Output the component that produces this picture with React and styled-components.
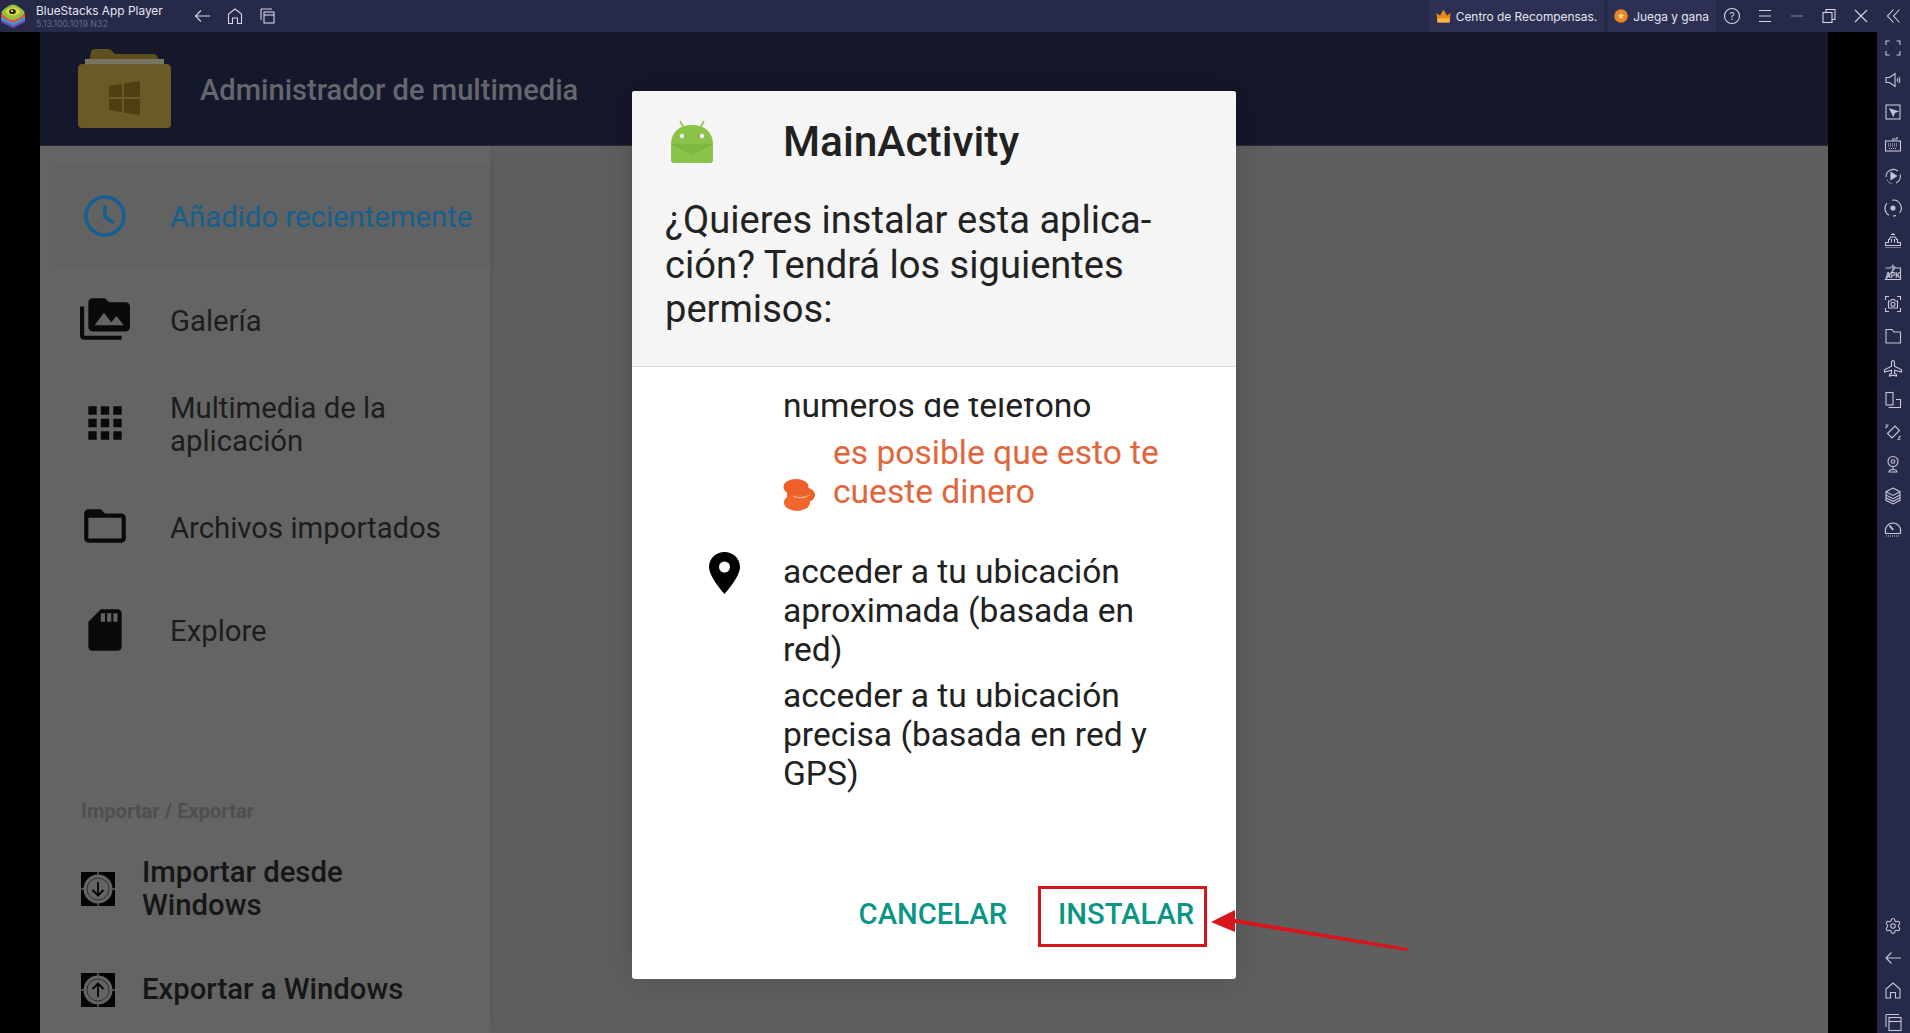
import React from 'react';
import styled, { createGlobalStyle } from 'styled-components';
import { Settings } from 'lucide-react';

const Global = createGlobalStyle`
  html, body { margin: 0; padding: 0; height: 100%; overflow: hidden; background: #000; }
  * { box-sizing: border-box; }
  #root { height: 100%; }
`;

const Page = styled.div`
  position: relative; width: 1910px; height: 1033px; overflow: hidden;
  display: flex; flex-direction: column; background: #000;
`;

/* title bar */
const TitleBar = styled.header`
  height: 32px; flex: none; background: #272948; display: flex; align-items: center;
  font-family: Inter, "Liberation Sans", sans-serif; color: #e4e5f0;
`;
const LogoSlot = styled.div`width: 36px; height: 32px; flex: none; display: flex; align-items: center;`;
const TitleCol = styled.div`width: 155px; flex: none; display: flex; flex-direction: column; margin-top: -1px;`;
const AppName = styled.div`font-size: 11.9px; line-height: 16px; white-space: nowrap;`;
const Version = styled.div`font-size: 8.8px; line-height: 10px; color: #666985; white-space: nowrap;`;
const NavGroup = styled.nav`display: flex; gap: 8px;`;
const Spacer = styled.div`flex: 1;`;
const Tab = styled.div`
  height: 32px; display: flex; align-items: center; gap: 5px; padding: 0 7px 0 ${p => p.$pad}px; margin-right: 4px;
  background: #2d3052; font-size: 11.9px; white-space: nowrap;
`;
const ControlGroup = styled.div`display: flex; align-items: center; gap: 4px; margin-left: -3px; margin-right: 2px;`;

const IconCell = styled.div`
  width: ${p => p.$w || 24}px; height: ${p => p.$h || 24}px; flex: none; display: flex; align-items: center; justify-content: center; color: #d4d5e6;
  svg { display: block; }
`;

/* stage */
const Stage = styled.div`flex: 1; min-height: 0; display: flex;`;
const Letterbox = styled.div`flex: 1; min-width: 0; padding: 0 49px 0 40px; background: #000; display: flex;`;
const Screen = styled.main`position: relative; flex: 1; min-width: 0; display: flex; flex-direction: column; overflow: hidden; background: #5f5f5f;`;
const AppHeader = styled.div`
  height: 114px; flex: none; background: #15172a; display: flex; align-items: center; padding-left: 38px; gap: 29px;
  border-bottom: 1px solid #2a2b36;
`;
const AppTitle = styled.h1`
  margin: 0; padding-top: 5px; font: 500 29.1px/1 Roboto, sans-serif; color: #65666f; white-space: nowrap;
`;
const Content = styled.div`flex: 1; min-height: 0; display: flex;`;
const Sidebar = styled.aside`
  width: 450px; flex: none; background: #646464; display: flex; flex-direction: column; overflow: hidden;
  padding-top: 18px; box-shadow: 6px 0 14px -8px rgba(0,0,0,.14);
`;
const Row = styled.div`
  height: 103.5px; flex: none; display: flex; align-items: center; gap: 40px;
  font: 400 29.3px/33px Roboto, sans-serif; color: ${p => p.$active ? '#15608e' : '#1d1d1d'};
  background: ${p => p.$active ? '#626262' : 'transparent'};
  margin-left: ${p => p.$active ? 15 : 0}px;
  padding-left: ${p => p.$active ? 25 : 40}px;
  svg { flex: none; fill: currentColor; }
`;
const RowText = styled.span`padding-top: 4px;`;
const RowIcon = styled.svg`color: #0a0a0a; fill: #0a0a0a;`;
const SectionLabel = styled.div`
  margin: 117px 0 0 41px; font: 700 20.1px/24px Roboto, sans-serif; color: #4f4f4f;
`;
const IORow = styled.div`
  display: flex; align-items: center; padding-left: 41px; gap: 27px; height: ${p => p.$h}px; flex: none; margin-top: ${p => p.$mt}px;
  font: 500 29.3px/33px Roboto, sans-serif; color: #161616;
  svg { flex: none; }
`;

/* dialog */
const Scrim = styled.div`
  position: absolute; inset: 0; display: flex; align-items: center; justify-content: center; padding: 5px 0 0 0;
`;
const Dialog = styled.section`
  width: 604px; height: 888px; display: flex; flex-direction: column; background: #fff; border-radius: 3px; overflow: hidden;
  box-shadow: 0 0 34px rgba(0,0,0,.16); font-family: Roboto, sans-serif; color: #212121;
`;
const DialogHead = styled.div`
  height: 276px; flex: none; background: #f5f5f5; border-bottom: 1px solid #dcdcdc; padding: 25px 34px 0;
`;
const DialogTitleRow = styled.div`display: flex; align-items: center; height: 50px; padding-left: 5px; gap: 70px;`;
const DialogTitle = styled.h2`margin: 0; padding-top: 2px; font: 500 42.4px/50px Roboto, sans-serif; color: #212121;`;
const Message = styled.p`margin: 32px 0 0 -1px; font: 400 38.1px/44.7px Roboto, sans-serif; color: #222;`;
const DialogBody = styled.div`flex: 1; min-height: 0; padding-top: 31px;`;
const Clip = styled.div`height: 100%; overflow: hidden;`;
const ScrollInner = styled.div`margin-top: -12px; padding-left: 34px; padding-right: 30px; font: 400 33.6px/39px Roboto, sans-serif; color: #212121;`;
const Perm = styled.div`display: grid; grid-template-columns: 117px 1fr; margin-top: ${p => p.$mt || 0}px;`;
const PermIcon = styled.div`display: flex; justify-content: center; svg { display: block; }`;
const Cost = styled.div`display: flex; align-items: flex-end; gap: 18px; color: #e2653b; svg { flex: none; }`;
const DialogFooter = styled.footer`
  flex: none; display: flex; justify-content: flex-end; align-items: center; gap: 31px; padding: 0 29px 32px 0;
`;
const TextButton = styled.button`
  appearance: none; background: none; border: 0; padding: 0 0 4px; font: 500 29.2px/1 Roboto, sans-serif; color: #0b9584;
`;
const InstallButton = styled(TextButton)`
  width: 169px; height: 61px; border: 3px solid #d4161c; padding: 0 0 4px 17px; text-align: left;
`;
const Arrow = styled.svg`position: absolute; left: 1210px; top: 900px;`;

/* right rail */
const Rail = styled.aside`
  width: 33px; flex: none; background: #272948; display: flex; flex-direction: column; justify-content: space-between; overflow: hidden;
`;
const RailGroup = styled.div`display: flex; flex-direction: column; margin-bottom: ${p => p.$mb || 0}px;`;
const RailCell = styled.div`height: 32px; flex: none; display: flex; align-items: center; justify-content: center; padding-right: 1px; color: #c6c8dd; svg { display: block; }`;

const S = ({ children, size = 24 }) => (
  <svg width={size} height={size} viewBox="0 0 24 24" fill="none" stroke="currentColor" strokeWidth="1.1">{children}</svg>
);

const railTop = [
  <S><path d="M5 9V5h3.500M15.500 5H19v4M5 15v4h3.500M15.500 19H19v-4" /></S>,
  <S><path d="M5 9.500h3.500L14 5.500v13l-5.500-4H5z" /><path d="M16 10.300a2.500 2.500 0 0 1 0 3.400M17.800 9a5 5 0 0 1 0 6" /></S>,
  <S><rect x="5" y="5" width="14" height="14" /><path d="M9 9l7.500 2.400-3.200 1.100-1 3.300z" fill="currentColor" /></S>,
  <S><rect x="4.500" y="9" width="15" height="10" /><path d="M12 9V7h4V5" /><path d="M7 12h10M7 14h10M8 16.500h8" strokeDasharray="1 1" /></S>,
  <S><path d="M5 13a7.500 7.500 0 0 1 12-6M19.300 10.500A7.500 7.500 0 0 1 15 19" /><path d="M6 16l3 3.300 3 .6" strokeDasharray="1 1.400" /><path d="M10 8.500l5.500 3.500-5.500 3.500z" fill="currentColor" /></S>,
  <S><path d="M6 7a8 8 0 0 0 2 12.300M11 4.200A8 8 0 0 1 18.600 17 M15 19.500a8 8 0 0 1-3 .5" /><circle cx="12" cy="12" r="2" fill="currentColor" /></S>,
  <S><path d="M4.500 14.500h3v-3h1l1-2.500h5l1 2.500h1v3h3v3h-15z" /><path d="M10.500 11v3.500M13.500 11v3.500M10 6.500h4M12 5v2" /><path d="M4.500 19.500h15" strokeDasharray="1 1" /></S>,
  <S><path d="M4.500 8H10M14 8h5.500v11.500h-15z" /><path d="M12 4.500v6M9.500 7H14.500" /><text x="12" y="17.500" textAnchor="middle" fontFamily="Inter, sans-serif" fontSize="7" fontWeight="700" fill="currentColor" stroke="none">APK</text></S>,
  <S><path d="M4.500 8V4.500H8M16 4.500h3.500V8M4.500 16v3.500H8M16 19.500h3.500V16" /><path d="M7.500 9h2.200l1-1.500h2.600l1 1.500h2.200v7h-9z" /><circle cx="12" cy="12.300" r="2" /></S>,
  <S><path d="M5 5.500h6l2 2.500h6.500v11H5z" /></S>,
  <S><path d="M12 4.500c1 0 1.500 1 1.500 2.300v3.400l7 3.600v2.200l-7-1.800v3l2 1.400v1.400l-3.500-.9-3.500.9v-1.400l2-1.400v-3l-7 1.800v-2.200l7-3.600V6.800c0-1.300.5-2.300 1.500-2.300z" /></S>,
  <S><rect x="5" y="4.500" width="7" height="12.500" /><path d="M15 11.500h4.500v8H7.500" /></S>,
  <S><path d="M6.500 13.500L14 6l4.500 4.500-7.500 7.500z" /><path d="M4.500 8l2-2 M4.500 5h3M19.500 16l-2 2M16.500 19.500l3-.5" /></S>,
  <S><circle cx="12" cy="9.500" r="5" /><circle cx="12" cy="9.500" r="1.800" /><path d="M12 14.500v3M8 20c0-1.500 1-2.500 4-2.500s4 1 4 2.500z" /></S>,
  <S><path d="M12 4l7 3.700v3.300l-7 3.700-7-3.700V7.700z" /><path d="M5 7.700l7 3.700 7-3.700M5 11v5.300l7 3.700 7-3.700V11" /><path d="M5 13.800l7 3.500 7-3.500" /></S>,
];
const railLast = (
  <S><path d="M4.500 16.500a7.700 7.700 0 1 1 15 0v1h-15z" /><path d="M8.500 9.500l3.800 4.500" strokeWidth="1.800" /><path d="M5 20h14" strokeDasharray="1 1" /></S>
);
const railBottom = [
  <Settings size={18} strokeWidth={1.4} />,
  <S><path d="M20 12H5M10.500 6.500L5 12l5.500 5.500" /></S>,
  <S><path d="M5 20v-9l7-6 7 6v9h-4.500v-5.500h-5V20z" /></S>,
  <S><path d="M5 4.500h13M5 4.500V17" /><rect x="8" y="7.500" width="12" height="13" /><path d="M8 11.500h12" /></S>,
];

const BlueStacksLogo = () => (
  <svg width="26" height="24" viewBox="0 0 26 24">
    <path d="M13 9l12 6v3l-12 6-12-6v-3z" fill="#6b4fb5" />
    <path d="M13 7l12 6v2.500l-12 6-12-6V13z" fill="#3d9ad8" />
    <path d="M13 4l12 6v3l-12 6-12-6v-3z" fill="#e2543a" />
    <path d="M13 .5c3 0 11 5 11.500 8 0 2.500-8 7.500-11.500 7.500S1.500 11 1.500 8.500C2 5.500 10 .5 13 .5z" fill="#8fc43f" />
    <ellipse cx="13" cy="7.500" rx="7" ry="4" fill="#e5d53c" />
    <ellipse cx="12.500" cy="7.500" rx="3.300" ry="2.600" fill="#1c2a22" />
    <circle cx="12" cy="7" r="1" fill="#fff" />
  </svg>
);
const Crown = () => (
  <svg width="15" height="14" viewBox="0 0 15 14">
    <path d="M.5 4l3.500 2.500L7.500.8 11 6.500 14.500 4l-1 9.500h-12z" fill="#e88a1e" />
    <path d="M1 9.500h13l-.500 4h-12z" fill="#f5b63f" />
  </svg>
);
const Medal = () => (
  <svg width="14" height="14" viewBox="0 0 14 14">
    <circle cx="7" cy="7" r="6.800" fill="#e8862a" />
    <path d="M7 3.500l1 2.300 2.500.2-1.900 1.600.6 2.400L7 8.800 4.800 10l.6-2.400L3.500 6l2.500-.2z" fill="#f9d27a" />
  </svg>
);

const FolderLogo = () => (
  <svg width="93" height="79" viewBox="0 0 93 79">
    <path d="M11 12l2-9q.5-3 4-3h13q2.500 0 4 2l3 3h38q4 0 5 4l1 5z" fill="#5f4e1f" />
    <rect x="7" y="10" width="79" height="7" fill="#77745f" />
    <path d="M0 20q0-5 5-5h83q5 0 5 5v55q0 4-4 4H4q-4 0-4-4z" fill="#6b5926" />
    <path d="M31 37l13-2v13H31zM46 34.500l16-2.500v16H46zM31 50h13v13l-13-2zM46 50h16v16l-16-2.500z" fill="#4f3f12" />
  </svg>
);
const ClockIcon = () => (
  <svg width="50" height="50" viewBox="0 0 50 50" style={{ fill: 'none' }}>
    <circle cx="25" cy="25" r="19" stroke="#15608e" strokeWidth="3.600" fill="none" />
    <path d="M25 14v12l9 6" stroke="#15608e" strokeWidth="3.400" fill="none" />
  </svg>
);
const MatIcon = ({ d }) => (
  <RowIcon width="50" height="50" viewBox="0 0 24 24"><path d={d} /></RowIcon>
);
const TransferIcon = ({ up }) => (
  <svg width="34" height="34" viewBox="0 0 34 34">
    <rect width="34" height="34" fill="#030303" />
    <circle cx="17" cy="17" r="14.500" fill="#646464" />
    <path d="M17 0v6M17 28v6M0 17h6M28 17h6" stroke="#646464" strokeWidth="1.300" />
    <path d={up ? 'M17 24V11M11.500 16L17 10.500 22.500 16' : 'M17 10v13M11.500 18l5.500 5.500 5.500-5.500'} fill="none" stroke="#050505" strokeWidth="1.800" />
    <circle cx="17" cy="17" r="11" fill="none" stroke="#2a2a2a" strokeWidth=".9" />
  </svg>
);
const AndroidIcon = () => (
  <svg width="42" height="43" viewBox="0 0 42 43">
    <path d="M9 1l4.500 8M33 1l-4.500 8" stroke="#8bc34a" strokeWidth="1.600" />
    <path d="M0 24C0 12 9 5 21 5s21 7 21 19v16q0 3-3 3H3q-3 0-3-3z" fill="#8bc34a" />
    <path d="M0 24l21 11 21-11z" fill="#7fb63f" />
    <circle cx="11" cy="16" r="2.200" fill="#f5f5f5" />
    <circle cx="31" cy="16" r="2.200" fill="#f5f5f5" />
  </svg>
);
const Coins = () => (
  <svg width="32" height="32" viewBox="0 0 32 32">
    <ellipse cx="13" cy="8" rx="12.500" ry="8" fill="#ef5f2a" />
    <ellipse cx="18" cy="16" rx="14" ry="8.500" fill="#ef5f2a" />
    <ellipse cx="14" cy="23.500" rx="13" ry="8.500" fill="#f0672f" />
    <path d="M10 17c5 2.500 11 2 17-1" stroke="#f9b093" strokeWidth="1.100" fill="none" />
  </svg>
);
const Pin = () => (
  <svg width="31" height="42" viewBox="0 0 31 42">
    <path fillRule="evenodd" d="M15.500 0C7 0 0 6.500 0 15c0 10 15.500 27 15.500 27S31 25 31 15C31 6.500 24 0 15.500 0zm0 20.500a5.500 5.500 0 1 1 0-11 5.500 5.500 0 0 1 0 11z" fill="#000" />
  </svg>
);

const PERM_MEDIA = 'M2 6H0v5h.01L0 20c0 1.100.9 2 2 2h18v-2H2V6zm20-2h-8l-2-2H6c-1.100 0-1.990.9-1.990 2L4 16c0 1.100.9 2 2 2h16c1.100 0 2-.9 2-2V6c0-1.100-.9-2-2-2zM7 15l4.500-6 3.500 4.510 2.500-3.010L21 15H7z';
const APPS = 'M4 8h4V4H4v4zm6 12h4v-4h-4v4zm-6 0h4v-4H4v4zm0-6h4v-4H4v4zm6 0h4v-4h-4v4zm6-10v4h4V4h-4zm-6 4h4V4h-4v4zm6 6h4v-4h-4v4zm0 6h4v-4h-4v4z';
const FOLDER = 'M20 6h-8l-2-2H4c-1.100 0-1.990.9-1.990 2L2 18c0 1.100.9 2 2 2h16c1.100 0 2-.9 2-2V8c0-1.100-.9-2-2-2zm0 12H4V8h16v10z';
const SD = 'M18 2h-8L4.020 8 4 20c0 1.100.9 2 2 2h12c1.100 0 2-.9 2-2V4c0-1.100-.9-2-2-2zm-6 6h-2V4h2v4zm3 0h-2V4h2v4zm3 0h-2V4h2v4z';

export default function App() {
  return (
    <Page>
      <Global />
      <TitleBar>
        <LogoSlot><BlueStacksLogo /></LogoSlot>
        <TitleCol>
          <AppName>BlueStacks App Player</AppName>
          <Version>5.13.100.1019  N32</Version>
        </TitleCol>
        <NavGroup>
          <IconCell><S><path d="M19 12H5M10 6.500L4.500 12l5.500 5.500" /></S></IconCell>
          <IconCell><S><path d="M5.500 19.500V10L12 5l6.500 5v9.500h-4V14h-5v5.500z" /></S></IconCell>
          <IconCell><S><path d="M6 5h11M6 5v11" /><rect x="9" y="8" width="10" height="11" /><path d="M9 11h10" /></S></IconCell>
        </NavGroup>
        <Spacer />
        <Tab $pad={7}><Crown />Centro de Recompensas.</Tab>
        <Tab $pad={6}><Medal />Juega y gana</Tab>
        <ControlGroup>
          <IconCell $w={30}><S><circle cx="12" cy="12" r="7.500" /><text x="12" y="15.500" textAnchor="middle" fontFamily="Inter, sans-serif" fontSize="10" fill="currentColor" stroke="none">?</text></S></IconCell>
          <IconCell $w={28}><S><path d="M6 6.500h12M6 12h12M6 17.500h12" /></S></IconCell>
          <IconCell $w={28}><S><path d="M6 12h12" stroke="#7d7f9c" /></S></IconCell>
          <IconCell $w={28}><S><rect x="6" y="8.500" width="9" height="10" /><path d="M9 8.500V5.500h9v10h-3" /></S></IconCell>
          <IconCell $w={28}><S><path d="M6 6l12 12M18 6L6 18" /></S></IconCell>
          <IconCell $w={29}><S><path d="M11.500 5.500L5.500 12l6 6.500M17.500 5.500L11.500 12l6 6.500" /></S></IconCell>
        </ControlGroup>
      </TitleBar>
      <Stage>
        <Letterbox>
          <Screen>
            <AppHeader>
              <FolderLogo />
              <AppTitle>Administrador de multimedia</AppTitle>
            </AppHeader>
            <Content>
              <Sidebar>
                <Row $active><ClockIcon /><RowText>Añadido recientemente</RowText></Row>
                <Row><MatIcon d={PERM_MEDIA} /><RowText>Galería</RowText></Row>
                <Row><MatIcon d={APPS} /><RowText>Multimedia de la<br />aplicación</RowText></Row>
                <Row><MatIcon d={FOLDER} /><RowText>Archivos importados</RowText></Row>
                <Row><MatIcon d={SD} /><RowText>Explore</RowText></Row>
                <SectionLabel>Importar / Exportar</SectionLabel>
                <IORow $h={66} $mt={33}><TransferIcon /><span>Importar desde<br />Windows</span></IORow>
                <IORow $h={66} $mt={35}><TransferIcon up />Exportar a Windows</IORow>
              </Sidebar>
            </Content>
            <Scrim>
              <Dialog>
                <DialogHead>
                  <DialogTitleRow>
                    <AndroidIcon />
                    <DialogTitle>MainActivity</DialogTitle>
                  </DialogTitleRow>
                  <Message>¿Quieres instalar esta aplica-<br />ción? Tendrá los siguientes<br />permisos:</Message>
                </DialogHead>
                <DialogBody>
                  <Clip>
                    <ScrollInner>
                      <Perm>
                        <span />
                        <div>números de teléfono</div>
                      </Perm>
                      <Perm $mt={8}>
                        <span />
                        <Cost><Coins /><span>es posible que esto te<br />cueste dinero</span></Cost>
                      </Perm>
                      <Perm $mt={41}>
                        <PermIcon><Pin /></PermIcon>
                        <div>acceder a tu ubicación<br />aproximada (basada en<br />red)</div>
                      </Perm>
                      <Perm $mt={7}>
                        <span />
                        <div>acceder a tu ubicación<br />precisa (basada en red y<br />GPS)</div>
                      </Perm>
                    </ScrollInner>
                  </Clip>
                </DialogBody>
                <DialogFooter>
                  <TextButton>CANCELAR</TextButton>
                  <InstallButton>INSTALAR</InstallButton>
                </DialogFooter>
              </Dialog>
            </Scrim>
          </Screen>
        </Letterbox>
        <Rail>
          <RailGroup>
            {railTop.map((icon, i) => <RailCell key={i}>{icon}</RailCell>)}
            <RailCell>{railLast}</RailCell>
          </RailGroup>
          <RailGroup $mb={-5}>
            {railBottom.map((icon, i) => <RailCell key={i}>{icon}</RailCell>)}
          </RailGroup>
        </Rail>
      </Stage>
      <Arrow width="200" height="60" viewBox="0 0 200 60">
        <path d="M1 22l24-12 0 9 173 29-1 3-172-28v9z" fill="#d9141a" />
      </Arrow>
    </Page>
  );
}
